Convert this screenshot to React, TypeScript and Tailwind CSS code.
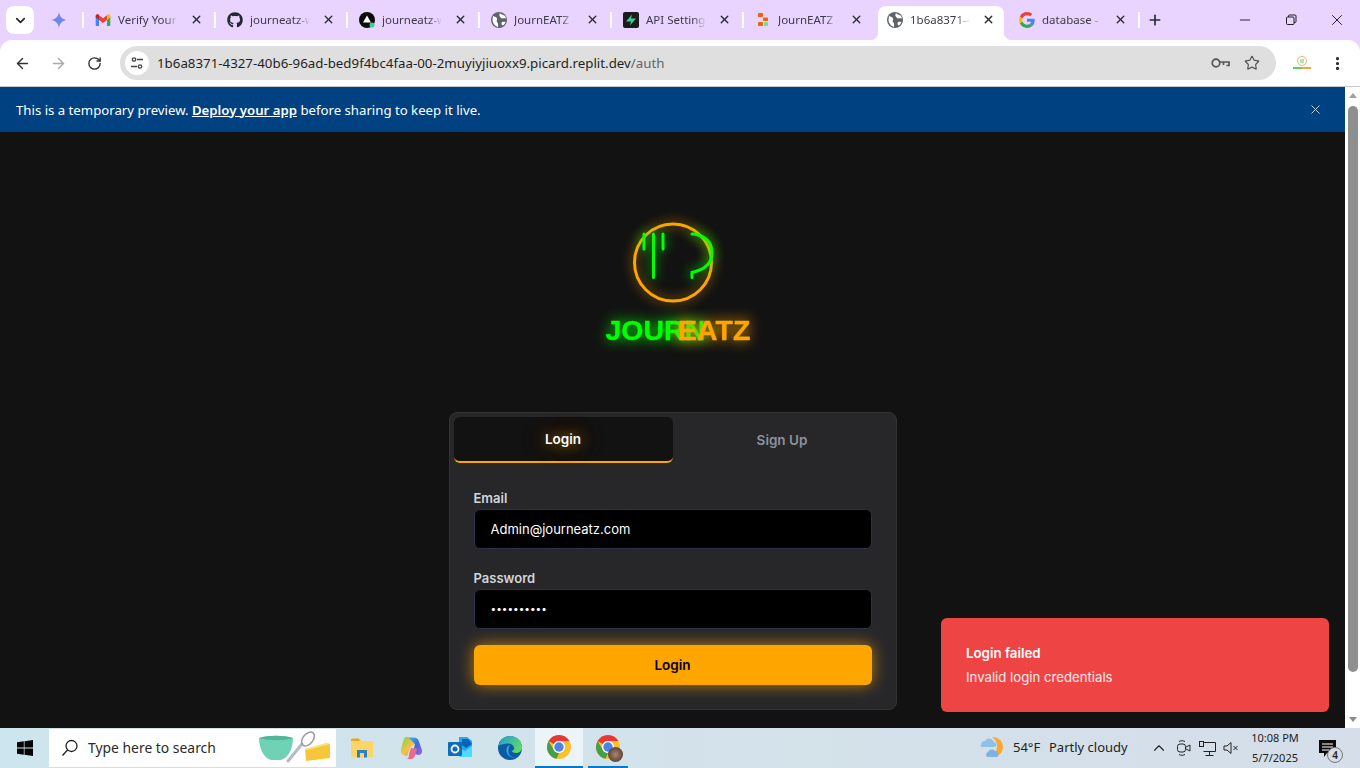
import React from 'react';
import { ArrowLeft, ArrowRight, ChevronDown, ChevronUp, EllipsisVertical, Minus, Plus, RotateCw, Star, X } from 'lucide-react';
import { FaGithub } from 'react-icons/fa';

const Gemini = () => (
  <svg width="16" height="16" viewBox="0 0 24 24">
    <defs>
      <linearGradient id="gem" x1="0" y1="1" x2="1" y2="0">
        <stop offset="0" stopColor="#4f8df5" />
        <stop offset="1" stopColor="#8f7fe8" />
      </linearGradient>
    </defs>
    <path d="M12 0C13 7 17 11 24 12C17 13 13 17 12 24C11 17 7 13 0 12C7 11 11 7 12 0Z" fill="url(#gem)" />
  </svg>
);

const Gmail = () => (
  <svg width="16" height="16" viewBox="0 0 24 24">
    <path d="M1 6v13.500A1.500 1.500 0 0 0 2.500 21H6v-9z" fill="#4285f4" />
    <path d="M18 12v9h3.500a1.500 1.500 0 0 0 1.500-1.500V6z" fill="#34a853" />
    <path d="M6 12V5l6 4.500L18 5v7l-6 4.500z" fill="#ea4335" />
    <path d="M1 6c0-2.500 2.800-3.500 4.500-2.200L6 4.200V12L1 8z" fill="#c5221f" />
    <path d="M18 4.200l.5-.4C20.200 2.500 23 3.500 23 6v2l-5 4z" fill="#fbbc04" />
  </svg>
);

const Vercelish = () => (
  <svg width="16" height="16" viewBox="0 0 16 16">
    <circle cx="8" cy="8" r="8" fill="#0b0b0b" />
    <path d="M8 3.500l4 7H4z" fill="#fff" />
    <circle cx="13" cy="13" r="2.500" fill="#3ecf8e" />
  </svg>
);

const Globe = () => (
  <svg width="16" height="16" viewBox="0 0 16 16">
    <circle cx="8" cy="8" r="8" fill="#5f6368" />
    <path d="M2 4c2 .5 3.500 1 4 2.500S5 9 6 10s1.500 2.500 1 5C4 14 1.500 11 1.500 8zM9 1c1 1.500 3 1.500 4.500 2.500 1 1 1.500 2 1.500 3-1.500-.5-2.500-.5-3.500 0S9 5 8.500 4 8.500 2 9 1zM11 10c1-.5 2.500-.5 3.500 0-.5 1.500-1.500 3-3 3.500-1-.5-1.500-2.500-.5-3.500z" fill="#fff" />
  </svg>
);

const Bolt = () => (
  <svg width="16" height="16" viewBox="0 0 16 16">
    <rect width="16" height="16" rx="2" fill="#1c1c1c" />
    <path d="M9 2.500L3 9.500h5l-1 4 6-7H8z" fill="#3ecf8e" />
  </svg>
);

const Replit = () => (
  <svg width="16" height="16" viewBox="0 0 16 16">
    <rect x="3" y="1" width="5" height="4" rx="0.800" fill="#f26207" />
    <rect x="8" y="5.500" width="5" height="3.500" rx="0.800" fill="#f26207" />
    <rect x="3" y="10" width="5" height="4" rx="0.800" fill="#f26207" />
    <rect x="9" y="10" width="4" height="4" rx="1" fill="#6ee08a" />
  </svg>
);

const GoogleG = ({ size = 16 }: { size?: number }) => (
  <svg width={size} height={size} viewBox="0 0 48 48">
    <path fill="#EA4335" d="M24 9.500c3.540 0 6.710 1.220 9.210 3.600l6.850-6.850C35.900 2.380 30.470 0 24 0 14.620 0 6.510 5.380 2.560 13.220l7.980 6.190C12.430 13.720 17.740 9.500 24 9.500z" />
    <path fill="#4285F4" d="M46.980 24.550c0-1.570-.15-3.090-.38-4.550H24v9.020h12.940c-.58 2.960-2.260 5.480-4.780 7.180l7.730 6c4.510-4.180 7.090-10.360 7.090-17.650z" />
    <path fill="#FBBC05" d="M10.530 28.590c-.48-1.450-.76-2.990-.76-4.590s.27-3.140.76-4.590l-7.980-6.190C.92 16.460 0 20.120 0 24c0 3.880.92 7.540 2.560 10.780l7.970-6.190z" />
    <path fill="#34A853" d="M24 48c6.480 0 11.930-2.130 15.890-5.810l-7.730-6c-2.150 1.450-4.920 2.300-8.160 2.300-6.260 0-11.570-4.220-13.470-9.910l-7.980 6.190C6.510 42.620 14.620 48 24 48z" />
  </svg>
);

const Chrome = ({ size = 24 }: { size?: number }) => (
  <svg width={size} height={size} viewBox="0 0 24 24">
    <circle cx="12" cy="12" r="12" fill="#fbc02d" />
    <path d="M12 0a12 12 0 0 1 10.400 6H12a6 6 0 0 0-5.200 3L1.600 6A12 12 0 0 1 12 0z" fill="#e53935" />
    <path d="M1.600 6l5.200 9a6 6 0 0 0 5.200 3l-2.500 5.800A12 12 0 0 1 1.600 6z" fill="#43a047" />
    <circle cx="12" cy="12" r="6" fill="#fff" />
    <circle cx="12" cy="12" r="4.700" fill="#4a84ea" />
  </svg>
);

const tabs = [
  { icon: <Gmail />, title: 'Verify Your Account' },
  { icon: <FaGithub size={16} className="text-[#24292f]" />, title: 'journeatz-web' },
  { icon: <Vercelish />, title: 'journeatz-web' },
  { icon: <Globe />, title: 'JournEATZ - Home' },
  { icon: <Bolt />, title: 'API Settings' },
  { icon: <Replit />, title: 'JournEATZ - Replit' },
];

const TabItem = ({ icon, title, active, last }: { icon: React.ReactNode; title: string; active?: boolean; last?: boolean }) => (
  <div className="relative flex h-[40px] w-[132px] shrink-0 items-center pb-[1px]">
    {active && (
      <div className="absolute left-[2px] right-[4px] top-[6px] bottom-0 rounded-t-lg bg-white">
        <div className="absolute bottom-0 left-[-8px] h-2 w-2 bg-[radial-gradient(circle_at_0_0,#e9d3ff_8px,#ffffff_8.500px)]" />
        <div className="absolute bottom-0 right-[-8px] h-2 w-2 bg-[radial-gradient(circle_at_100%_0,#e9d3ff_8px,#ffffff_8.500px)]" />
      </div>
    )}
    <div className="relative flex w-full items-center pl-[11px]">
      <div className="flex h-4 w-4 shrink-0 items-center justify-center">{icon}</div>
      <div className="ml-[7px] w-[60px] overflow-hidden whitespace-nowrap pt-[1px] text-[11.500px] text-[#3c3c46] [mask-image:linear-gradient(to_right,black_78%,transparent)]">
        {title}
      </div>
      <X size={13} strokeWidth={2.500} className="ml-[12px] text-[#2b2b30]" />
    </div>
    {!active && !last && <div className="absolute right-0 top-[12px] h-[16px] w-[2px] bg-white" />}
  </div>
);

const TabBar = () => (
  <div className="flex h-[40px] items-start bg-[#e9d3ff]">
    <div className="ml-[6px] mt-[6px] flex h-[28px] w-[28px] items-center justify-center rounded-lg bg-white">
      <ChevronDown size={15} strokeWidth={2.500} className="text-[#1f1f1f]" />
    </div>
    <div className="relative flex h-[40px] w-[50px] items-center justify-center">
      <Gemini />
      <div className="absolute right-0 top-[12px] h-[16px] w-[2px] bg-white" />
    </div>
    {tabs.map((t, i) => (
      <TabItem key={i} icon={t.icon} title={t.title} last={i === 5} />
    ))}
    <TabItem icon={<Globe />} title="1b6a8371-4327" active />
    <TabItem icon={<GoogleG />} title="database - Google" />
    <div className="relative -ml-[2px] flex h-[40px] w-[34px] items-center justify-center">
      <Plus size={16} strokeWidth={2.500} className="text-[#2b2b30]" />
    </div>
    <div className="ml-auto flex h-[40px] items-center">
      <div className="flex w-[46px] justify-center">
        <Minus size={16} strokeWidth={1.300} className="text-[#111]" />
      </div>
      <div className="flex w-[46px] justify-center">
        <svg width="12" height="12" viewBox="0 0 12 12" fill="none" stroke="#1f1f1f">
          <rect x="1.500" y="3" width="7.500" height="7.500" rx="1" />
          <path d="M3.500 3V2a1 1 0 0 1 1-1h5.500a1 1 0 0 1 1 1v5.500a1 1 0 0 1-1 1H9" />
        </svg>
      </div>
      <div className="flex w-[46px] justify-center">
        <X size={18} strokeWidth={1.200} className="text-[#111]" />
      </div>
    </div>
  </div>
);

const Toolbar = () => (
  <div className="bg-[#e9d3ff]">
    <div className="flex h-[46px] items-center rounded-t-xl bg-white">
      <ArrowLeft size={17} strokeWidth={2} className="ml-[14px] text-[#333]" />
      <ArrowRight size={17} strokeWidth={2} className="ml-[19px] text-[#a8a8a8]" />
      <RotateCw size={15} strokeWidth={2.200} className="ml-[20px] text-[#333]" />
      <div className="ml-[18px] flex h-[34px] w-[1156px] items-center rounded-full bg-[#dfdfdf] pl-[5px] pr-[16px]">
        <div className="flex h-[24px] w-[24px] items-center justify-center rounded-full bg-white">
          <svg width="14" height="14" viewBox="0 0 14 14" fill="none" stroke="#444" strokeWidth="1.300">
            <circle cx="4" cy="3.500" r="1.700" />
            <path d="M7 3.500h6M1 10.500h6" />
            <circle cx="10" cy="10.500" r="1.700" />
          </svg>
        </div>
        <div className="ml-[8px] whitespace-nowrap pt-[1px] text-[13.300px] text-[#1f1f1f]">
          1b6a8371-4327-40b6-96ad-bed9f4bc4faa-00-2muyiyjiuoxx9.picard.replit.dev<span className="text-[#5f6368]">/auth</span>
        </div>
        <svg className="ml-auto" width="19" height="12" viewBox="0 0 19 12" fill="none" stroke="#555" strokeWidth="1.700">
          <circle cx="5" cy="6" r="3.800" />
          <path d="M9 5h9v3.500h-2.500M12.500 5v3" />
        </svg>
        <Star size={16} strokeWidth={1.800} className="ml-[14px] text-[#555]" />
      </div>
      <svg className="ml-[16px]" width="20" height="16" viewBox="0 0 20 16">
        <circle cx="10" cy="6" r="4.500" fill="none" stroke="#f4b26a" />
        <path d="M9 4v4M11 4v4" stroke="#55d455" />
        <path d="M1 13h9" stroke="#55d455" strokeWidth="2" />
        <path d="M10 13h9" stroke="#f4a338" strokeWidth="2" />
      </svg>
      <EllipsisVertical size={17} strokeWidth={2.500} className="ml-[17px] text-[#222]" />
    </div>
  </div>
);

const Logo = () => (
  <svg width="180" height="150" viewBox="0 0 180 150" className="block overflow-visible">
    <circle cx="83" cy="52.500" r="38.500" fill="none" stroke="#ffa500" strokeWidth="3" className="[filter:drop-shadow(0_0_6px_rgba(255,165,0,0.8))]" />
    <g fill="none" stroke="#00ff00" strokeWidth="3" strokeLinecap="round" className="[filter:drop-shadow(0_0_6px_#00ff00)]">
      <path d="M54 24v15M63.500 24v43.500M73 24v15" />
      <path d="M102 24h2q18 3 18 19q0 15-20 19.500v5" />
    </g>
    <text x="15.500" y="130" fontSize="28.500" fontWeight="700" stroke="#00ff00" strokeWidth="0.400" fontFamily="'Liberation Sans', Arial, sans-serif" fill="#00ff00" className="[filter:drop-shadow(0_0_7px_#00ff00)]">
      JOURN
    </text>
    <text x="88" y="130" fontSize="28.500" fontWeight="700" stroke="#ffa500" strokeWidth="0.400" fontFamily="'Liberation Sans', Arial, sans-serif" fill="#ffa500" className="[filter:drop-shadow(0_0_7px_#ffa500)]">
      EATZ
    </text>
  </svg>
);

const AuthCard = () => (
  <div className="flex h-[298px] w-[448px] shrink-0 flex-col rounded-lg border border-[#333336] bg-[#27272a] p-1 font-['Inter',sans-serif]">
    <div className="flex h-[46px]">
      <div className="flex w-[219px] items-center justify-center rounded-md border-b-2 border-[#ffa500] bg-[#121212] text-[13.500px] font-semibold text-white">
        <span className="[text-shadow:0_0_14px_rgba(255,165,0,0.6),0_0_24px_rgba(255,165,0,0.6)]">Login</span>
      </div>
      <div className="flex w-[219px] items-center justify-center text-[13.500px] font-semibold text-[#8b929c]">Sign Up</div>
    </div>
    <div className="flex flex-col px-5 pt-[25px]">
      <div className="h-5 text-[13px] font-semibold leading-5 text-[#d1d5db]">Email</div>
      <input
        readOnly
        value="Admin@journeatz.com"
        className="mt-[1px] h-10 rounded-md border border-[#2a3345] bg-black px-4 text-[13px] text-white outline-none"
      />
      <div className="mt-[19px] h-5 text-[13px] font-semibold leading-5 text-[#d1d5db]">Password</div>
      <input
        readOnly
        type="password"
        value="Admin12345"
        className="mt-[1px] h-10 rounded-md border border-[#2a3345] bg-black px-4 pb-[2px] text-[10px] text-white outline-none"
      />
      <button className="mt-4 h-10 rounded-md bg-[#ffa500] text-[13.500px] font-semibold text-black shadow-[0_0_16px_rgba(255,165,0,0.7)]">
        Login
      </button>
    </div>
  </div>
);

const Toast = () => (
  <div className="absolute bottom-[16px] right-[16px] h-[94px] w-[388px] rounded-md bg-[#ef4444] py-[25px] pl-[25px] font-['Inter',sans-serif] text-white">
    <div className="text-[13.300px] font-semibold leading-5">Login failed</div>
    <div className="mt-1 text-[13.200px] leading-5 text-white/90">Invalid login credentials</div>
  </div>
);

const Scrollbar = () => (
  <div className="flex w-[15px] shrink-0 flex-col items-center bg-white pt-[6px]">
    <div className="h-0 w-0 border-x-[4.500px] border-b-[5px] border-x-transparent border-b-[#a0a0a0]" />
    <div className="ml-[1px] mt-[8px] h-[566px] w-[10px] rounded-full bg-[#8f8f8f]" />
    <div className="mt-auto mb-[6px] h-0 w-0 border-x-[4.500px] border-t-[5px] border-x-transparent border-t-[#8a8a8a]" />
  </div>
);

const Page = () => (
  <div className="flex h-[642px] border-t border-[#c8c8c8]">
    <div className="relative flex min-w-0 flex-1 flex-col overflow-hidden bg-[#121212]">
      <div className="flex h-[45px] shrink-0 items-center justify-between border-b border-[#0b3a6b] bg-[#004182] pl-[16px] pr-[22px] text-[13.200px] text-white">
        <div className="pt-[3px]">
          This is a temporary preview. <span className="font-semibold underline">Deploy your app</span> before sharing to keep it live.
        </div>
        <X size={15} strokeWidth={1.500} className="text-[#c9d9ea]" />
      </div>
      <div className="flex flex-col items-center">
        <div className="pb-[52px] pl-[15px] pt-[78px]">
          <Logo />
        </div>
        <AuthCard />
      </div>
      <Toast />
    </div>
    <Scrollbar />
  </div>
);

const Folder = () => (
  <svg width="24" height="22" viewBox="0 0 24 22">
    <path d="M1 3a1.500 1.500 0 0 1 1.500-1.500h6L11 4H1z" fill="#e6a817" />
    <rect x="1" y="4" width="22" height="16.500" rx="1.500" fill="#fcd565" />
    <path d="M7 20.500V13h10v7.500h-3V16h-4v4.500z" fill="#2f7fc9" />
  </svg>
);

const Copilot = () => (
  <svg width="24" height="24" viewBox="0 0 24 24">
    <defs>
      <linearGradient id="cp1" x1="0" y1="0" x2="1" y2="1">
        <stop offset="0" stopColor="#2fb8e8" />
        <stop offset="0.500" stopColor="#3d6be0" />
        <stop offset="1" stopColor="#b05fd8" />
      </linearGradient>
      <linearGradient id="cp2" x1="0" y1="0" x2="1" y2="1">
        <stop offset="0" stopColor="#7fd05a" />
        <stop offset="0.500" stopColor="#f5c242" />
        <stop offset="1" stopColor="#f0608a" />
      </linearGradient>
    </defs>
    <path d="M7 1h8c2 0 3 1 3.500 3l1.500 6c-2-2-4-2-6-1l-3 3-3 8c-3-1-6-1-6-5 0-3 2-9 3-12 .5-1.500 1-2 2-2z" fill="url(#cp2)" />
    <path d="M10 2h6c2 0 3 1 3.500 2.500L23 14c.5 3-1 5-4 5l-3-1-1-6 1-4-3-3z" fill="url(#cp1)" />
    <path d="M12 12l6 .5-2 7c-.5 2-2 3.500-4 3.500H8c2-1 2-3 2-5z" fill="#ea6a8c" />
  </svg>
);

const Outlook = () => (
  <svg width="24" height="24" viewBox="0 0 24 24">
    <path d="M11 1h8l5 4v14a2 2 0 0 1-2 2H11z" fill="#28a8ea" />
    <path d="M14 3h6l4 5-6 4-4-3z" fill="#0364b8" />
    <path d="M11 12l6 3 7-5v9a2 2 0 0 1-2 2H11z" fill="#50d9ff" />
    <rect x="0" y="6" width="14" height="14" rx="1" fill="#0f6cbd" />
    <circle cx="7" cy="13" r="3.500" fill="none" stroke="#fff" strokeWidth="1.800" />
  </svg>
);

const Edge = () => (
  <svg width="24" height="24" viewBox="0 0 24 24">
    <defs>
      <linearGradient id="ed1" x1="0" y1="0" x2="1" y2="0.600">
        <stop offset="0" stopColor="#1d9ed8" />
        <stop offset="1" stopColor="#5fd86a" />
      </linearGradient>
    </defs>
    <circle cx="12" cy="12" r="12" fill="#0c59a4" />
    <path d="M0.500 10C2 4 6.500 0 12 0c7 0 12 5 12 11 0 4-3 6-6 6-2.500 0-4-1-4.500-2.500 2 .5 3-1 2.500-3C15 8 12 7 9 7.500 5 8 2 8.500.5 10z" fill="url(#ed1)" />
    <path d="M12 9c-3 .5-4.500 4-3 8 1 3 4.500 5.500 9 4.500C15 22 11 20.500 10.500 16c-.2-2 0-5 1.500-7z" fill="#2fa7e0" />
  </svg>
);

const Taskbar = () => (
  <div className="flex h-[40px] items-center bg-[linear-gradient(to_right,#cde5ee,#d3e2ea_50%,#d5dee9)]">
    <div className="flex w-[49px] shrink-0 justify-center">
      <svg width="16" height="16" viewBox="0 0 16 16" fill="#050505">
        <path d="M0 2.300l6.800-1v6.300H0zM7.500 1.200L16 0v7.600H7.500zM0 8.400h6.800v6.400l-6.800-1zM7.500 8.400H16V16l-8.500-1.200z" />
      </svg>
    </div>
    <div className="flex h-[40px] w-[287px] shrink-0 items-center border-y border-[#d6dde0] bg-white pl-[12px] pr-[4px]">
      <svg width="18" height="18" viewBox="0 0 18 18" fill="none" stroke="#222" strokeWidth="1.300">
        <circle cx="10.500" cy="7" r="5.500" />
        <path d="M6.500 11L1.500 16.500" />
      </svg>
      <div className="ml-[9px] whitespace-nowrap pt-[1px] text-[13.900px] text-[#2a2a2a]">Type here to search</div>
      <svg className="ml-auto" width="74" height="36" viewBox="0 0 74 36">
        <path d="M1 8c10-3 24-3 34 0 0 9-4 20-12 22h-10C5 28 1 17 1 8z" fill="#6fd2b4" />
        <path d="M1 8c10-3 24-3 34 0-10 3-24 3-34 0z" fill="#4fb697" />
        <path d="M30 31L44 14" stroke="#b9b9c6" strokeWidth="3" strokeLinecap="round" />
        <ellipse cx="50" cy="9" rx="5" ry="8" transform="rotate(40 50 9)" fill="none" stroke="#9a9aa8" strokeWidth="1.500" />
        <path d="M47 19l22-6 3 1v14l-24 3z" fill="#f8c63a" />
        <path d="M47 19l22-6 3 1-23 6z" fill="#fde27c" />
      </svg>
    </div>
    <div className="ml-[14px] flex w-[24px] justify-center"><Folder /></div>
    <div className="ml-[25px] flex w-[24px] justify-center"><Copilot /></div>
    <div className="ml-[25px] flex w-[24px] justify-center"><Outlook /></div>
    <div className="ml-[26px] flex w-[24px] justify-center"><Edge /></div>
    <div className="ml-[13px] flex h-[40px] w-[48px] items-center justify-center border-b-[2px] border-[#0a78c9] bg-[#ebf4f8]">
      <Chrome />
    </div>
    <div className="ml-[5px] relative flex h-[40px] w-[40px] items-center justify-center border-b-[2px] border-[#0a78c9]">
      <Chrome />
      <div className="absolute bottom-[4px] right-[5px] h-[15px] w-[15px] rounded-full bg-[radial-gradient(circle,#a98770,#3b2a22)]" />
    </div>
    <div className="ml-[351px] flex w-[26px] justify-center">
      <svg width="26" height="26" viewBox="0 0 26 26">
        <path d="M13 2a10 10 0 1 1-5 18c6 1 10-3 10-9 0-4-2-7-5-9z" fill="#f8a932" />
        <path d="M2 10a4 4 0 0 1 4-4 5 5 0 0 1 9 1c3 0 3 5 0 5H4c-2 0-3-1-2-2z" fill="#8fc0ea" />
        <path d="M8 22a3 3 0 0 1 1-5 4 4 0 0 1 7-1c4 0 5 6 1 6z" fill="#7db2e4" />
      </svg>
    </div>
    <div className="ml-[8px] w-[28px] whitespace-nowrap text-[13px] text-[#222]">54°F</div>
    <div className="ml-[8px] w-[79px] whitespace-nowrap text-[13px] text-[#222]">Partly cloudy</div>
    <ChevronUp size={18} strokeWidth={1.500} className="ml-[22px] text-[#222]" />
    <svg className="ml-[8px]" width="16" height="18" viewBox="0 0 16 18" fill="none" stroke="#222">
      <rect x="1.500" y="5" width="8" height="8" rx="2.500" />
      <path d="M10 8l4-2v6l-4-2M3 2.500c1.500-1 4-1 6 0M3 15.500c1.500 1 4 1 6 0" />
    </svg>
    <svg className="ml-[7px]" width="17" height="17" viewBox="0 0 17 17" fill="none" stroke="#222">
      <path d="M4.500 2.500h12v9h-12M10.500 11.500v4M6.500 15.500h8" />
      <rect x="0.500" y="1.500" width="4" height="5" />
    </svg>
    <svg className="ml-[7px]" width="16" height="16" viewBox="0 0 16 16" fill="none" stroke="#222">
      <path d="M1 6h3l4-3.500v11L4 10H1zM10.500 6l4 4M14.500 6l-4 4" />
    </svg>
    <div className="ml-[10px] flex w-[52px] flex-col items-center text-[11px] leading-[20px] text-[#222]">
      <div className="whitespace-nowrap">10:08 PM</div>
      <div className="whitespace-nowrap">5/7/2025</div>
    </div>
    <div className="relative ml-[17px] h-[26px] w-[24px]">
      <svg width="17" height="17" viewBox="0 0 17 17" className="absolute left-[1px] top-[5px]">
        <path d="M0 0h17v13H8l-3 4v-4H0z" fill="#0c0c0c" />
        <path d="M3 4h11M3 7h11M3 10h7" stroke="#fff" />
      </svg>
      <div className="absolute bottom-[-2px] right-[-1px] flex h-[16px] w-[16px] items-center justify-center rounded-full border border-[#777] bg-[#d6dde6] text-[10px] font-semibold text-[#222]">
        4
      </div>
    </div>
  </div>
);

export default function App() {
  return (
    <div className="flex h-[768px] w-[1360px] flex-col overflow-hidden bg-white font-['Noto_Sans',sans-serif]">
      <TabBar />
      <Toolbar />
      <Page />
      <Taskbar />
    </div>
  );
}
